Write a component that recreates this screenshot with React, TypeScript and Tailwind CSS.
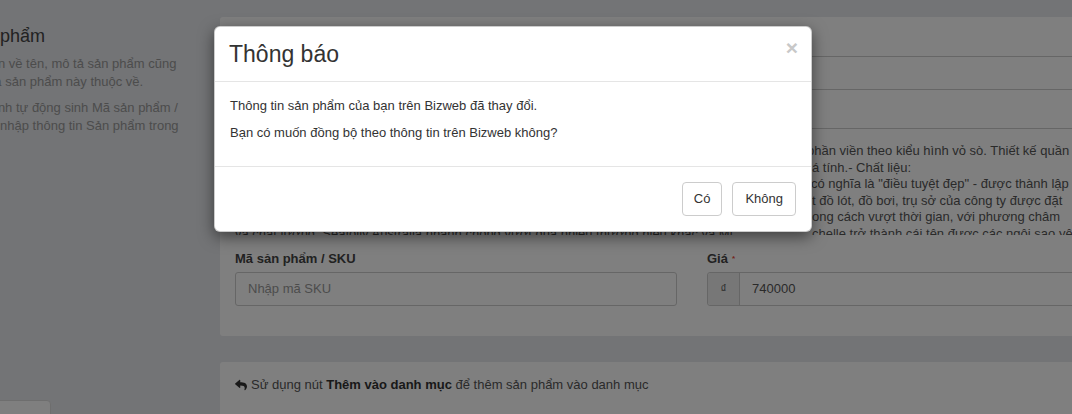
import { FaReply } from "react-icons/fa";

type DescRow = { pre: string; post: string; w: string };

// Mô tả sản phẩm: phần đầu mỗi dòng nằm dưới hộp thoại
const descRows: DescRow[] = [
  {
    pre: "- Bộ đồ bơi hai mảnh với áo ngực gọng mềm, quần bikini cạp trễ nổi bật nhờ đường ",
    post: "phần viền theo kiểu hình vỏ sò. Thiết kế quần",
    w: "w-[572px]",
  },
  {
    pre: "lưng thấp giúp tôn dáng gợi cảm, phù hợp với những cô nàng năng động và c",
    post: "á tính.- Chất liệu:",
    w: "w-[577px]",
  },
  {
    pre: "- Thương hiệu: Seafolly là thương hiệu đồ bơi nổi tiếng của Úc, tên gọi ",
    post: "có nghĩa là \"điều tuyệt đẹp\" - được thành lập",
    w: "w-[576px]",
  },
  {
    pre: "năm 1975 tại Sydney, Úc. Seafolly chuyên thiết kế và sản xuấ",
    post: "t đồ lót, đồ bơi, trụ sở của công ty được đặt",
    w: "w-[577px]",
  },
  {
    pre: "Seafolly luôn mang đến cho phái đẹp những thiết kế mang ph",
    post: "ong cách vượt thời gian, với phương châm",
    w: "w-[577px]",
  },
  {
    pre: "và chất lượng, Seafolly Australia nhanh chóng vượt qua nhiều thương hiệu khác và Mi",
    post: "chelle trở thành cái tên được các ngôi sao yêu thích",
    w: "w-[577px]",
  },
];

function Field({ label, children }: { label: React.ReactNode; children: React.ReactNode }) {
  return (
    <div className="flex flex-col">
      <div className="text-[13px] font-bold leading-[19px] text-[#444] mb-[4px]">{label}</div>
      {children}
    </div>
  );
}

export default function App() {
  return (
    <div
      className="relative w-[1072px] h-[414px] overflow-hidden bg-[#e6e8ec]"
      style={{ fontFamily: '"Liberation Sans", Arial, sans-serif' }}
    >
      {/* Page */}
      <div className="flex pt-[17px] ml-[-104px]">
        {/* Left info column */}
        <div className="w-[324px] shrink-0 flex flex-col pt-[9px]">
          <div className="text-[18px] leading-[20px] text-[#444] whitespace-nowrap -ml-[10px]">Thông tin sản phẩm</div>
          <div className="mt-[9px] text-[13px] leading-[18px] text-[#999] whitespace-nowrap">
            <div>Cung cấp thông tin về tên, mô tả sản phẩm cũng</div>
            <div>như danh mục mà sản phẩm này thuộc về.</div>
          </div>
          <div className="mt-[8px] text-[13px] leading-[18px] text-[#999] whitespace-nowrap">
            <div>Bizweb sẽ tiến hành tự động sinh Mã sản phẩm /</div>
            <div>SKU giúp bạn khi nhập thông tin Sản phẩm trong</div>
          </div>
          <div className="mt-[265px] w-[155px] h-[40px] bg-white border border-[#ddd] rounded-tr-[4px]"></div>
        </div>

        {/* Main column */}
        <div className="w-[944px] shrink-0 flex flex-col">
          {/* Card: product info */}
          <div className="bg-white rounded-[3px] p-[15px] flex flex-col">
            <Field label="Tên sản phẩm">
              <div className="mt-[1px] h-[34px] border border-[#ccc] rounded-[3px] px-[12px] flex items-center text-[13px] text-[#555]">
                Đồ bơi Seafolly Shell Bandeau
              </div>
            </Field>

            <div className="mt-[15px]">
              <Field label="Mô tả">
                <div className="border-t border-[#ccc] pt-[14px] h-[107px] overflow-hidden">
                  {descRows.map((r, i) => (
                    <div key={i} className="flex text-[13px] leading-[16.5px] text-[#555] whitespace-nowrap">
                      <span className={`${r.w} shrink-0 overflow-hidden`}>{r.pre}</span>
                      <span>{r.post}</span>
                    </div>
                  ))}
                </div>
              </Field>
            </div>

            <div className="mt-[14px] grid grid-cols-2 gap-[30px]">
              <Field label="Mã sản phẩm / SKU">
                <div className="h-[34px] border border-[#ccc] rounded-[3px] px-[12px] flex items-center text-[13px] text-[#999]">
                  Nhập mã SKU
                </div>
              </Field>
              <Field
                label={
                  <span className="flex items-center gap-[4px]">
                    Giá <span className="text-[#e74c3c] text-[8px] leading-none">*</span>
                  </span>
                }
              >
                <div className="h-[34px] border border-[#ccc] rounded-[3px] flex text-[13px]">
                  <div className="w-[32px] shrink-0 bg-[#eee] border-r border-[#ccc] flex items-center justify-center text-[#555] text-[12px] rounded-l-[3px]">
                    ₫
                  </div>
                  <div className="px-[12px] flex items-center text-[#555]">740000</div>
                </div>
              </Field>
            </div>
            <div className="h-[15px]"></div>
          </div>

          {/* Card: category hint */}
          <div className="mt-[26px] bg-white rounded-[3px] px-[15px] pt-[14px] pb-[30px] flex items-center gap-[4px] text-[13px] leading-[18px] text-[#555]">
            <FaReply className="w-[12px] h-[12px] text-[#333]" />
            <span>
              Sử dụng nút <b className="text-[#333]">Thêm vào danh mục</b> để thêm sản phẩm vào danh mục
            </span>
          </div>
        </div>
      </div>

      {/* Backdrop */}
      <div className="absolute inset-0 bg-black/50"></div>

      {/* Modal */}
      <div className="absolute left-[214px] top-[26px] w-[598px] bg-white rounded-[6px] border border-black/20 shadow-[0_5px_15px_rgba(0,0,0,0.5)]">
        <div className="flex items-start justify-between px-[15px] py-[15px] border-b border-[#e5e5e5]">
          <div className="text-[23px] leading-[24px] text-[#333] -ml-[1px]">Thông báo</div>
          <div className="text-[21px] font-bold leading-[21px] text-[#c8c8c8] -mt-[5px] -mr-[2px]">×</div>
        </div>
        <div className="p-[15px] text-[13px] leading-[17px] text-[#333]">
          <p className="mb-[10px]">Thông tin sản phẩm của bạn trên Bizweb đã thay đổi.</p>
          <p className="mb-[10px]">Bạn có muốn đồng bộ theo thông tin trên Bizweb không?</p>
        </div>
        <div className="flex justify-end gap-[10px] p-[15px] border-t border-[#e5e5e5]">
          <button className="h-[34px] px-[11px] bg-white border border-[#ccc] rounded-[4px] text-[13px] text-[#333]">
            Có
          </button>
          <button className="h-[34px] px-[12px] bg-white border border-[#ccc] rounded-[4px] text-[13px] text-[#333]">
            Không
          </button>
        </div>
      </div>
    </div>
  );
}
